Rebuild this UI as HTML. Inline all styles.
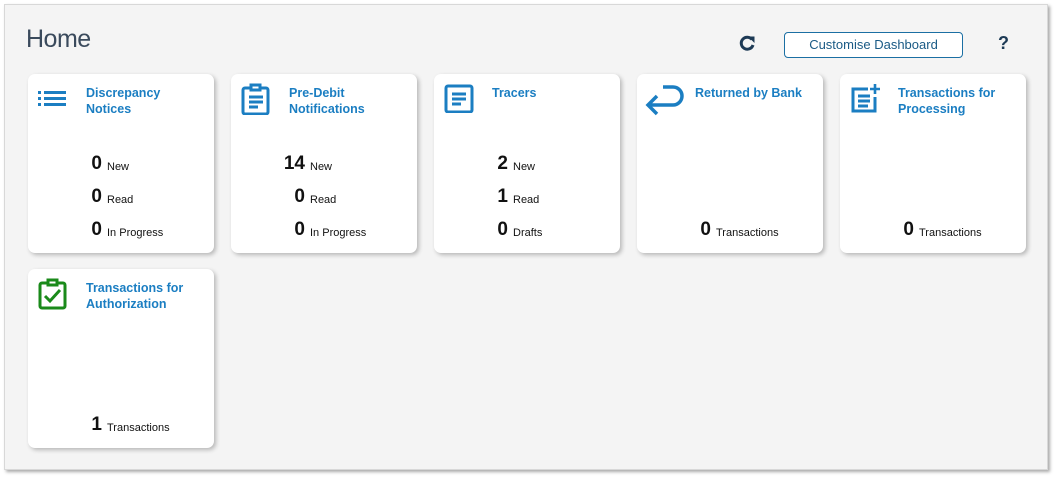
<!DOCTYPE html>
<html><head><style>
body{margin:0;width:1058px;height:481px;background:#fff;font-family:"Liberation Sans",sans-serif;position:relative;overflow:hidden}
.panel{position:absolute;left:4px;top:4px;width:1042px;height:464px;background:#f4f4f4;border:1px solid #d8d8d8;box-shadow:2px 2px 3px #aaa}
.home{position:absolute;left:26px;top:25px;font-size:25px;color:#3a4a5c;letter-spacing:-0.5px}
.btn{position:absolute;left:784px;top:32px;width:177px;height:24px;border:1px solid #1b6fa3;border-radius:4px;background:#fff;color:#1a5a85;font-size:13px;text-align:center;line-height:24px}
.q{position:absolute;left:998px;top:33px;font-size:18px;font-weight:bold;color:#1d3a55}
.card{position:absolute;width:186px;height:179px;background:#fff;border-radius:7px;box-shadow:2px 2px 4px rgba(0,0,0,.25)}
.t{position:absolute;left:58px;top:11px;font-size:12.5px;font-weight:bold;color:#1b7ec2;line-height:16px}
.ic{position:absolute;left:10px;top:9px}
.row{position:absolute;left:0;width:74px;text-align:right;font-size:19px;font-weight:bold;color:#111}
.lb{position:absolute;left:79px;font-size:11px;color:#111}
</style></head><body>
<div class="panel"></div>
<div class="home">Home</div>
<svg style="position:absolute;left:738px;top:34px" width="18" height="18" viewBox="0 0 18 18"><path d="M14 5.5A6 6 0 1 0 15 11" fill="none" stroke="#1d3a55" stroke-width="3"/><path d="M10 2.5h6.5v6.5z" fill="#1d3a55"/></svg>
<div class="btn">Customise Dashboard</div>
<div class="q">?</div>

<div class="card" style="left:28px;top:74px">
<svg class="ic" width="30" height="30" viewBox="0 0 30 30" fill="#1b7ec2"><rect x="0" y="8" width="3" height="3"/><rect x="6" y="8" width="22" height="3"/><rect x="0" y="14" width="3" height="3"/><rect x="6" y="14" width="22" height="3"/><rect x="0" y="20" width="3" height="3"/><rect x="6" y="20" width="22" height="3"/></svg>
<div class="t">Discrepancy<br>Notices</div>
<div class="row" style="top:79px">0</div><div class="lb" style="top:87px">New</div>
<div class="row" style="top:112px">0</div><div class="lb" style="top:120px">Read</div>
<div class="row" style="top:145px">0</div><div class="lb" style="top:153px">In Progress</div>
</div>

<div class="card" style="left:231px;top:74px">
<svg class="ic" width="30" height="32" viewBox="0 0 30 32" fill="none" stroke="#1b7ec2" stroke-width="3"><rect x="2" y="5" width="25" height="26" rx="2"/><rect x="10" y="2" width="9" height="5" fill="#fff"/><path d="M8 14h14M8 19h14M8 24h9"/></svg>
<div class="t">Pre-Debit<br>Notifications</div>
<div class="row" style="top:79px">14</div><div class="lb" style="top:87px">New</div>
<div class="row" style="top:112px">0</div><div class="lb" style="top:120px">Read</div>
<div class="row" style="top:145px">0</div><div class="lb" style="top:153px">In Progress</div>
</div>

<div class="card" style="left:434px;top:74px">
<svg class="ic" width="30" height="30" viewBox="0 0 30 30" fill="none" stroke="#1b7ec2" stroke-width="3"><rect x="2" y="3" width="26" height="26" rx="2"/><path d="M8 11h14M8 16h14M8 21h9"/></svg>
<div class="t">Tracers</div>
<div class="row" style="top:79px">2</div><div class="lb" style="top:87px">New</div>
<div class="row" style="top:112px">1</div><div class="lb" style="top:120px">Read</div>
<div class="row" style="top:145px">0</div><div class="lb" style="top:153px">Drafts</div>
</div>

<div class="card" style="left:637px;top:74px">
<svg style="position:absolute;left:8px;top:9px" width="40" height="34" viewBox="0 0 40 34" fill="none" stroke="#1b7ec2" stroke-width="3.5"><path d="M18 4h10a9 9 0 0 1 0 18H4M12 13l-9 9 9 9"/></svg>
<div class="t">Returned by Bank</div>
<div class="row" style="top:145px">0</div><div class="lb" style="top:153px">Transactions</div>
</div>

<div class="card" style="left:840px;top:74px">
<svg class="ic" width="32" height="32" viewBox="0 0 32 32" fill="none" stroke="#1b7ec2" stroke-width="3"><path d="M18 6H3v22h22V14"/><path d="M8 13h12M8 18h12M8 23h10"/><path d="M25 1v10M20 6h10" stroke-width="2.6"/></svg>
<div class="t">Transactions for<br>Processing</div>
<div class="row" style="top:145px">0</div><div class="lb" style="top:153px">Transactions</div>
</div>

<div class="card" style="left:28px;top:269px">
<svg class="ic" width="30" height="32" viewBox="0 0 30 32" fill="none" stroke="#1a8a1a" stroke-width="3"><rect x="2" y="5" width="25" height="25" rx="2"/><rect x="10" y="2" width="9" height="5" fill="#fff"/><path d="M7 18l5 5 10-11"/></svg>
<div class="t">Transactions for<br>Authorization</div>
<div class="row" style="top:145px">1</div><div class="lb" style="top:153px">Transactions</div>
</div>
</body></html>
